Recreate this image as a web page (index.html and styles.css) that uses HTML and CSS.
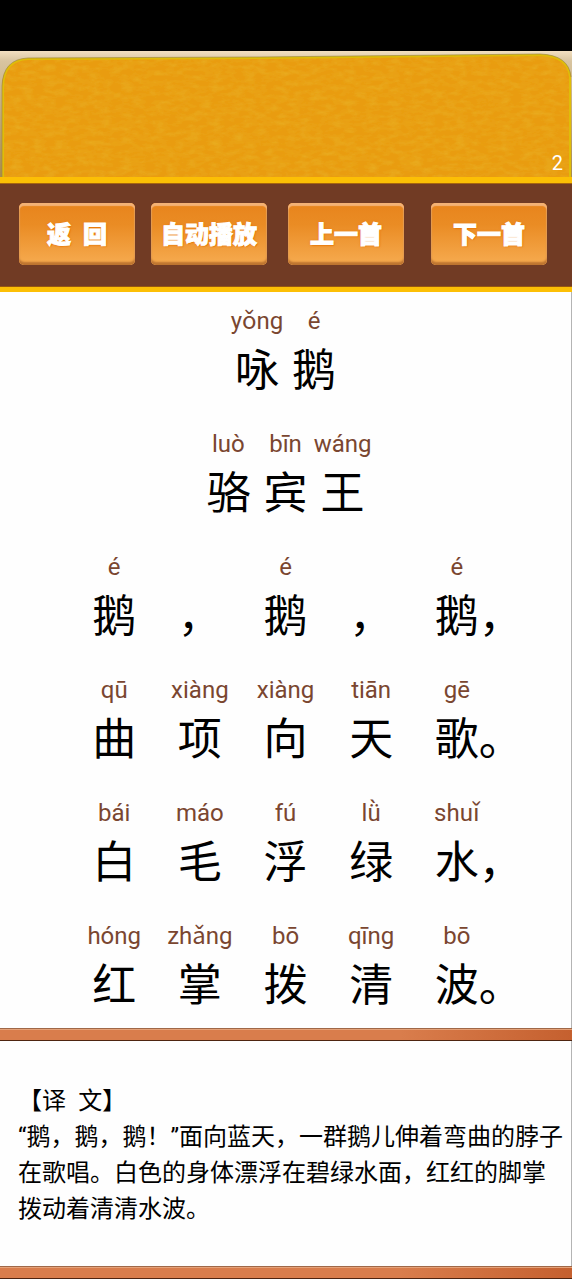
FILE: index.html
```html
<!DOCTYPE html>
<html lang="zh-CN">
<head>
<meta charset="utf-8">
<meta name="viewport" content="width=device-width, initial-scale=1">
<title>咏鹅</title>
<link rel="stylesheet" href="styles.css">
</head>
<body>
<div class="status-bar"></div>
<header class="banner">
  <svg class="banner-art" viewBox="0 0 572 126" preserveAspectRatio="none" aria-hidden="true">
    <defs>
      <linearGradient id="sand" x1="0" y1="0" x2="0" y2="1">
        <stop offset="0" stop-color="#f2dfc0"/><stop offset=".08" stop-color="#d8c4a0"/><stop offset="1" stop-color="#a98b4c"/>
      </linearGradient>
      <filter id="weave" x="0" y="0" width="100%" height="100%">
        <feTurbulence type="fractalNoise" baseFrequency="0.09 0.2" numOctaves="3" seed="4"/>
        <feColorMatrix values="0 0 0 0 .82  0 0 0 0 .46  0 0 0 0 .02  1.1 0 0 0 -.4"/>
        <feComposite in2="SourceGraphic" operator="in"/>
      </filter>
    </defs>
    <rect width="572" height="126" fill="url(#sand)"/>
    <path d="M2 126V35Q3 9 28 8L260 7L540 4Q569 5 571 26V126Z" fill="#e99c10"/>
    <path d="M2 126V35Q3 9 28 8L260 7L540 4Q569 5 571 26V126Z" fill="#000" filter="url(#weave)"/>
    <path d="M3 126V35Q4 9 28 8L260 7L540 4Q568 5 570 26V126" fill="none" stroke="#dfbd08" stroke-width="2"/>
    <path d="M2 126V35Q3 8 28 7L260 6L540 3Q569 4 571 26" fill="none" stroke="#9c8742" stroke-width="1" opacity=".65"/>
  </svg>
  <span class="page-number">2</span>
</header>
<nav class="toolbar" aria-label="诗歌导航">
  <button class="tool-button" type="button">返&ensp;回</button>
  <button class="tool-button" type="button">自动播放</button>
  <button class="tool-button" type="button">上一首</button>
  <button class="tool-button" type="button">下一首</button>
</nav>
<main class="poem">
  <h1 class="line line-tight">
    <span class="cell"><span class="pinyin">yǒng</span><span class="hanzi">咏</span></span>
    <span class="cell"><span class="pinyin">é</span><span class="hanzi">鹅</span></span>
  </h1>
  <h2 class="line line-tight">
    <span class="cell"><span class="pinyin">luò</span><span class="hanzi">骆</span></span>
    <span class="cell"><span class="pinyin">bīn</span><span class="hanzi">宾</span></span>
    <span class="cell"><span class="pinyin">wáng</span><span class="hanzi">王</span></span>
  </h2>
  <p class="line">
    <span class="cell"><span class="pinyin">é</span><span class="hanzi">鹅</span></span>
    <span class="cell"><span class="pinyin"></span><span class="hanzi">，</span></span>
    <span class="cell"><span class="pinyin">é</span><span class="hanzi">鹅</span></span>
    <span class="cell"><span class="pinyin"></span><span class="hanzi">，</span></span>
    <span class="cell"><span class="pinyin">é</span><span class="hanzi">鹅<span class="hang">，</span></span></span>
  </p>
  <p class="line">
    <span class="cell"><span class="pinyin">qū</span><span class="hanzi">曲</span></span>
    <span class="cell"><span class="pinyin">xiàng</span><span class="hanzi">项</span></span>
    <span class="cell"><span class="pinyin">xiàng</span><span class="hanzi">向</span></span>
    <span class="cell"><span class="pinyin">tiān</span><span class="hanzi">天</span></span>
    <span class="cell"><span class="pinyin">gē</span><span class="hanzi">歌<span class="hang">。</span></span></span>
  </p>
  <p class="line">
    <span class="cell"><span class="pinyin">bái</span><span class="hanzi">白</span></span>
    <span class="cell"><span class="pinyin">máo</span><span class="hanzi">毛</span></span>
    <span class="cell"><span class="pinyin">fú</span><span class="hanzi">浮</span></span>
    <span class="cell"><span class="pinyin">lǜ</span><span class="hanzi">绿</span></span>
    <span class="cell"><span class="pinyin">shuǐ</span><span class="hanzi">水<span class="hang">，</span></span></span>
  </p>
  <p class="line">
    <span class="cell"><span class="pinyin">hóng</span><span class="hanzi">红</span></span>
    <span class="cell"><span class="pinyin">zhǎng</span><span class="hanzi">掌</span></span>
    <span class="cell"><span class="pinyin">bō</span><span class="hanzi">拨</span></span>
    <span class="cell"><span class="pinyin">qīng</span><span class="hanzi">清</span></span>
    <span class="cell"><span class="pinyin">bō</span><span class="hanzi">波<span class="hang">。</span></span></span>
  </p>
</main>
<div class="rail"></div>
<section class="translation">
  <h2 class="translation-title">【译&ensp;文】</h2>
  <p class="translation-text">“鹅，鹅，鹅！”面向蓝天，一群鹅儿伸着弯曲的脖子在歌唱。白色的身体漂浮在碧绿水面，红红的脚掌拨动着清清水波。</p>
</section>
<div class="rail"></div>
</body>
</html>
```
FILE: styles.css
```css
* { box-sizing: border-box; }

body {
  margin: 0;
  background: #fefefe;
  color: #000;
  font-family: Roboto, "Noto Sans CJK SC", sans-serif;
}

h1, h2, p { margin: 0; font-weight: 400; }

.status-bar { height: 51px; background: #000; }

.banner {
  position: relative;
  display: flex;
  justify-content: flex-end;
  align-items: flex-end;
  height: 132px;
  padding: 0 9px 4px;
  border-bottom: 6px solid #fcbf05;
}

.banner-art {
  position: absolute;
  inset: 0;
  width: 100%;
  height: 100%;
}

.page-number {
  position: relative;
  color: #fff;
  font-size: 20px;
  line-height: 20px;
}

.toolbar {
  display: grid;
  grid-template-columns: 132fr 137fr 143fr 116fr;
  padding: 19px 25px 22px 19px;
  background: #713b24;
  border-top: 1px solid #a7650f;
  border-bottom: 5px solid #fcbf05;
  box-shadow: inset 0 -1px #97560f;
}

.tool-button {
  width: 116px;
  height: 62px;
  padding: 0 0 2px;
  border: 0;
  border-radius: 5px;
  background: linear-gradient(#e8841c, #ea8c24 35%, #f6ab50);
  box-shadow: inset 0 3px 1px #f3b276, inset 0 -3px 2px #bd7430, inset 1px 0 1px #f2a85a, inset -1px 0 1px #f2a85a;
  color: #fff;
  font-family: "Noto Sans CJK SC", sans-serif;
  font-size: 24px;
  font-weight: 900;
  line-height: 28px;
  -webkit-text-stroke: 1px #fff;
  text-shadow: 0 0 3px #e87400, 1px 1px 1px #e87400;
}

.poem {
  display: grid;
  gap: 31px;
  padding: 11px 0 18px;
  border-right: 1px solid #b4b4b4;
}

.line { display: flex; justify-content: center; }

.cell {
  display: flex;
  flex-direction: column;
  align-items: center;
  width: 15%;
}

.line-tight .cell { width: 10%; }

.pinyin {
  height: 36px;
  color: #7a4630;
  font-size: 24px;
  line-height: 36px;
}

.hanzi {
  font-family: "Noto Sans CJK SC", sans-serif;
  font-size: 44px;
  line-height: 56px;
  white-space: nowrap;
}

.hang { display: inline-block; width: 0; }

.rail {
  height: 13px;
  background: linear-gradient(90deg, transparent 70%, #c5602f), #d97d4c;
  border-top: 1px solid #9f6848;
  border-bottom: 1px solid #4e2410;
  box-shadow: inset 0 1px #e5a279;
}

.translation {
  padding: 42px 7px 39px 18px;
  border-right: 1px solid #b4b4b4;
  font-size: 24px;
  line-height: 36px;
}

.translation-title { font-size: 24px; }
```
